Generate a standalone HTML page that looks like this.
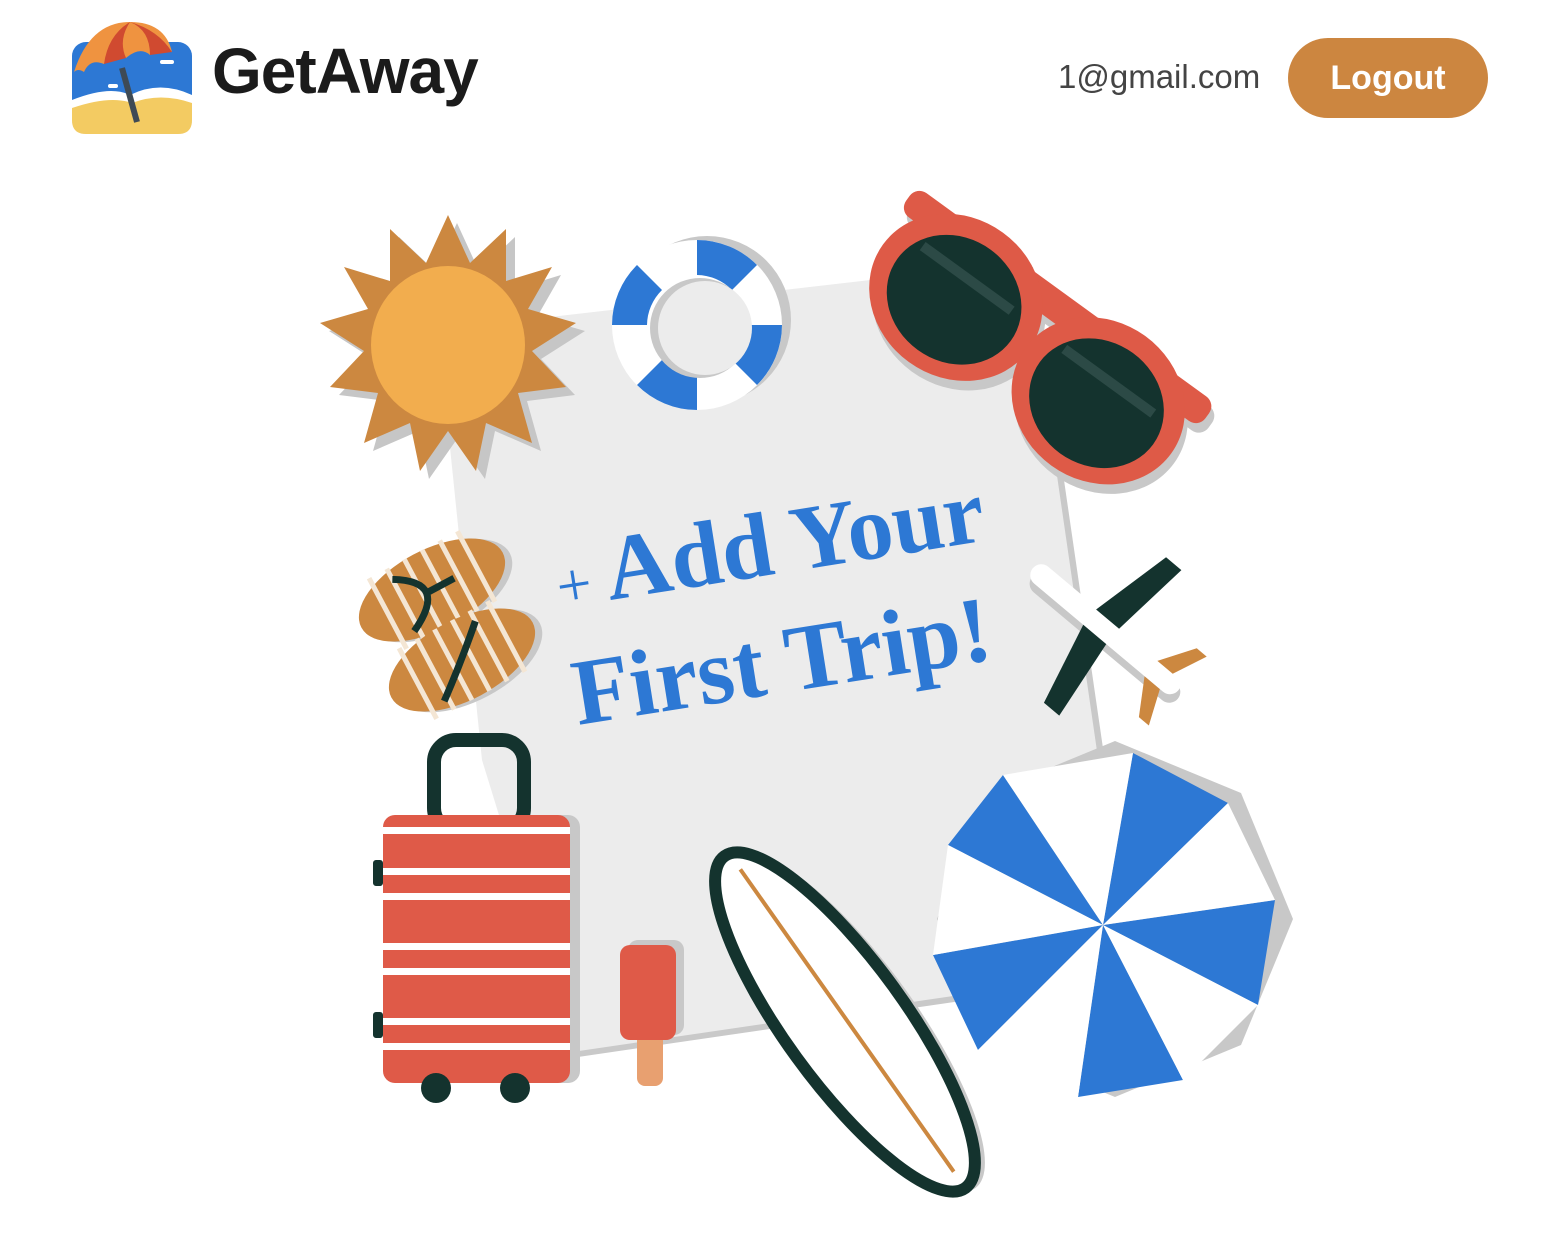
<!DOCTYPE html>
<html><head><meta charset="utf-8"><style>
html,body{margin:0;padding:0;background:#fff;width:1548px;height:1240px;overflow:hidden;font-family:"Liberation Sans","DejaVu Sans",sans-serif}
.title{position:absolute;left:212px;top:34px;font-size:64px;font-weight:bold;color:#1b1b1b;letter-spacing:-1px}
.email{position:absolute;left:1058px;top:58px;font-size:33px;color:#444}
.btn{position:absolute;left:1288px;top:38px;width:200px;height:80px;border-radius:40px;background:#cc8640;color:#fff;font-size:34px;font-weight:bold;text-align:center;line-height:80px}
svg{position:absolute;left:0;top:0}
</style></head><body>
<svg width="1548" height="1240" viewBox="0 0 1548 1240">
<!-- logo -->
<rect x="72" y="42" width="120" height="92" rx="14" fill="#2d78d4"/>
<path d="M72 100 Q110 85 130 95 Q160 80 192 95 L192 120 Q192 134 178 134 L86 134 Q72 134 72 120Z" fill="#fff"/>
<path d="M72 108 Q110 95 132 103 Q160 92 192 103 L192 120 Q192 134 178 134 L86 134 Q72 134 72 120Z" fill="#f3cb62"/>
<line x1="122" y1="68" x2="137" y2="122" stroke="#3e4a55" stroke-width="6"/>
<path d="M74 72 Q90 22 130 22 Q165 22 172 52 Q160 45 150 55 Q140 46 126 58 Q112 52 104 64 Q90 58 84 72 Q78 68 74 72Z" fill="#ef9340"/>
<path d="M104 64 Q108 35 130 22 Q118 40 126 58Z M150 55 Q150 30 130 22 Q158 30 172 52Z" fill="#d04a30"/>
<rect x="160" y="60" width="14" height="4" rx="2" fill="#fff"/><rect x="108" y="84" width="10" height="4" rx="2" fill="#fff"/>
<!-- paper -->
<polygon points="445,335 1033,267 1105,762 968,1000 578,1057 490,762" fill="#c9c9c9"/>
<polygon points="438,330 1026,262 1098,758 960,995 572,1052 482,760" fill="#ececec"/>
<!-- sun -->
<g transform="translate(448,345)">
<polygon transform="translate(9,8)" fill="#c6c6c6" points="0,-130 22,-82 58,-116 58,-64 104,-78 80,-36 128,-22 84,6 118,42 70,48 84,98 38,78 28,126 0,86 -28,126 -38,78 -84,98 -70,48 -118,42 -84,6 -128,-22 -80,-36 -104,-78 -58,-64 -58,-116 -22,-82"/>
<polygon fill="#cc8840" points="0,-130 22,-82 58,-116 58,-64 104,-78 80,-36 128,-22 84,6 118,42 70,48 84,98 38,78 28,126 0,86 -28,126 -38,78 -84,98 -70,48 -118,42 -84,6 -128,-22 -80,-36 -104,-78 -58,-64 -58,-116 -22,-82"/>
<ellipse rx="77" ry="79" fill="#f2ad4e"/>
</g>
<!-- lifebuoy -->
<circle cx="707" cy="320" r="84" fill="#c8c8c8"/>
<g transform="translate(697,325)">
<circle r="85" fill="#fff"/>
<path d="M0,-85 A85,85 0 0 1 60,-60 L35,-35 A50,50 0 0 0 0,-50Z" fill="#2d78d4"/>
<path d="M85,0 A85,85 0 0 1 60,60 L35,35 A50,50 0 0 0 50,0Z" fill="#2d78d4"/>
<path d="M0,85 A85,85 0 0 1 -60,60 L-35,35 A50,50 0 0 0 0,50Z" fill="#2d78d4"/>
<path d="M-85,0 A85,85 0 0 1 -60,-60 L-35,-35 A50,50 0 0 0 -50,0Z" fill="#2d78d4"/>
<circle cx="3" cy="3" r="50" fill="#c8c8c8"/><circle cx="8" cy="3" r="47" fill="#ececec"/>
</g>
<!-- sunglasses -->
<g transform="translate(1030,345) rotate(36)">
<g transform="translate(8,6)" fill="#c8c8c8"><rect x="-185" y="-62" width="370" height="30" rx="12"/><ellipse cx="-88" cy="5" rx="90" ry="80"/><ellipse cx="88" cy="5" rx="90" ry="80"/></g>
<rect x="-185" y="-62" width="370" height="30" rx="12" fill="#de5a47"/>
<ellipse cx="-88" cy="5" rx="90" ry="80" fill="#de5a47"/><ellipse cx="88" cy="5" rx="90" ry="80" fill="#de5a47"/>
<ellipse cx="-88" cy="8" rx="70" ry="62" fill="#14332e"/><ellipse cx="88" cy="8" rx="70" ry="62" fill="#14332e"/>
<rect x="-145" y="-22" width="110" height="10" fill="#2c4a46"/><rect x="30" y="-22" width="110" height="10" fill="#2c4a46"/>
</g>
<!-- flip flops -->
<g transform="translate(432,590) rotate(-28)"><ellipse cx="6" cy="4" rx="80" ry="40" fill="#c8c8c8"/><ellipse rx="80" ry="40" fill="#cc8840"/>
<g stroke="#f4e6d4" stroke-width="5"><line x1="-50" y1="-40" x2="-50" y2="40"/><line x1="-30" y1="-40" x2="-30" y2="40"/><line x1="-10" y1="-40" x2="-10" y2="40"/><line x1="10" y1="-40" x2="10" y2="40"/><line x1="30" y1="-40" x2="30" y2="40"/><line x1="50" y1="-40" x2="50" y2="40"/></g>
<path d="M-30,-28 Q20,0 -35,28 M25,0 L-5,0" stroke="#14332e" stroke-width="7" fill="none"/></g>
<g transform="translate(462,660) rotate(-28)"><ellipse cx="6" cy="4" rx="80" ry="40" fill="#c8c8c8"/><ellipse rx="80" ry="40" fill="#cc8840"/>
<g stroke="#f4e6d4" stroke-width="5"><line x1="-50" y1="-40" x2="-50" y2="40"/><line x1="-30" y1="-40" x2="-30" y2="40"/><line x1="-10" y1="-40" x2="-10" y2="40"/><line x1="10" y1="-40" x2="10" y2="40"/><line x1="30" y1="-40" x2="30" y2="40"/><line x1="50" y1="-40" x2="50" y2="40"/></g>
<path d="M30,-28 Q0,0 -35,28" stroke="#14332e" stroke-width="7" fill="none"/></g>
<!-- text -->
<g font-family="Liberation Serif,serif" font-weight="bold" fill="#2d78d4">
<text x="560" y="608" font-size="92" transform="rotate(-9 560 608)"><tspan font-weight="normal" font-size="62">+ </tspan>Add Your</text>
<text x="578" y="725" font-size="94" transform="rotate(-9 578 725)">First Trip!</text>
</g>
<!-- plane -->
<g transform="translate(1105,630) rotate(40)">
<rect x="-95" y="-10" width="190" height="22" rx="11" fill="#c8c8c8" transform="translate(5,5)"/>
<rect x="-95" y="-12" width="190" height="22" rx="11" fill="#fff"/>
<polygon points="-20,-10 10,-10 20,-95 0,-95" fill="#14332e"/>
<polygon points="-20,10 10,10 20,95 0,95" fill="#14332e"/>
<polygon points="60,-10 80,-10 95,-45 82,-45" fill="#cc8840"/>
<polygon points="60,10 80,10 95,45 82,45" fill="#cc8840"/>
</g>
<!-- umbrella -->
<g transform="translate(1103,925)">
<polygon transform="translate(12,-6)" fill="#c8c8c8" points="0,-178 126,-126 178,0 126,126 0,178 -126,126 -178,0 -126,-126"/>
<path d="M0,0 L30,-172 L125,-122Z M0,0 L172,-25 L155,80Z M0,0 L80,155 L-25,172Z M0,0 L-125,125 L-170,30Z M0,0 L-155,-80 L-100,-150Z" fill="#2d78d4"/>
<path d="M0,0 L125,-122 L172,-25Z M0,0 L155,80 L80,155Z M0,0 L-25,172 L-125,125Z M0,0 L-170,30 L-155,-80Z M0,0 L-100,-150 L30,-172Z" fill="#fff"/>
</g>
<!-- suitcase -->
<rect x="434" y="740" width="90" height="90" rx="22" fill="none" stroke="#14332e" stroke-width="14"/>
<rect x="390" y="815" width="190" height="268" rx="12" fill="#c8c8c8"/>
<rect x="383" y="815" width="187" height="268" rx="12" fill="#df5a48"/>
<g fill="#fff"><rect x="383" y="827" width="187" height="7"/><rect x="383" y="868" width="187" height="7"/><rect x="383" y="893" width="187" height="7"/><rect x="383" y="943" width="187" height="7"/><rect x="383" y="968" width="187" height="7"/><rect x="383" y="1018" width="187" height="7"/><rect x="383" y="1043" width="187" height="7"/></g>
<rect x="373" y="860" width="10" height="26" rx="3" fill="#14332e"/><rect x="373" y="1012" width="10" height="26" rx="3" fill="#14332e"/>
<circle cx="436" cy="1088" r="15" fill="#14332e"/><circle cx="515" cy="1088" r="15" fill="#14332e"/>
<!-- popsicle -->
<rect x="628" y="940" width="56" height="95" rx="10" fill="#c8c8c8"/>
<rect x="637" y="1030" width="26" height="56" rx="8" fill="#e8a070"/>
<rect x="620" y="945" width="56" height="95" rx="10" fill="#df5a48"/>
<!-- surfboard -->
<g transform="translate(845,1022) rotate(54)">
<ellipse rx="205" ry="60" fill="#c8c8c8" transform="translate(6,-8)"/>
<ellipse rx="205" ry="60" fill="#fff" stroke="#14332e" stroke-width="12"/>
<line x1="-185" y1="-5" x2="185" y2="0" stroke="#cc8840" stroke-width="4"/>
</g>
</svg>
<div class="title">GetAway</div>
<div class="email">1@gmail.com</div>
<div class="btn">Logout</div>
</body></html>
